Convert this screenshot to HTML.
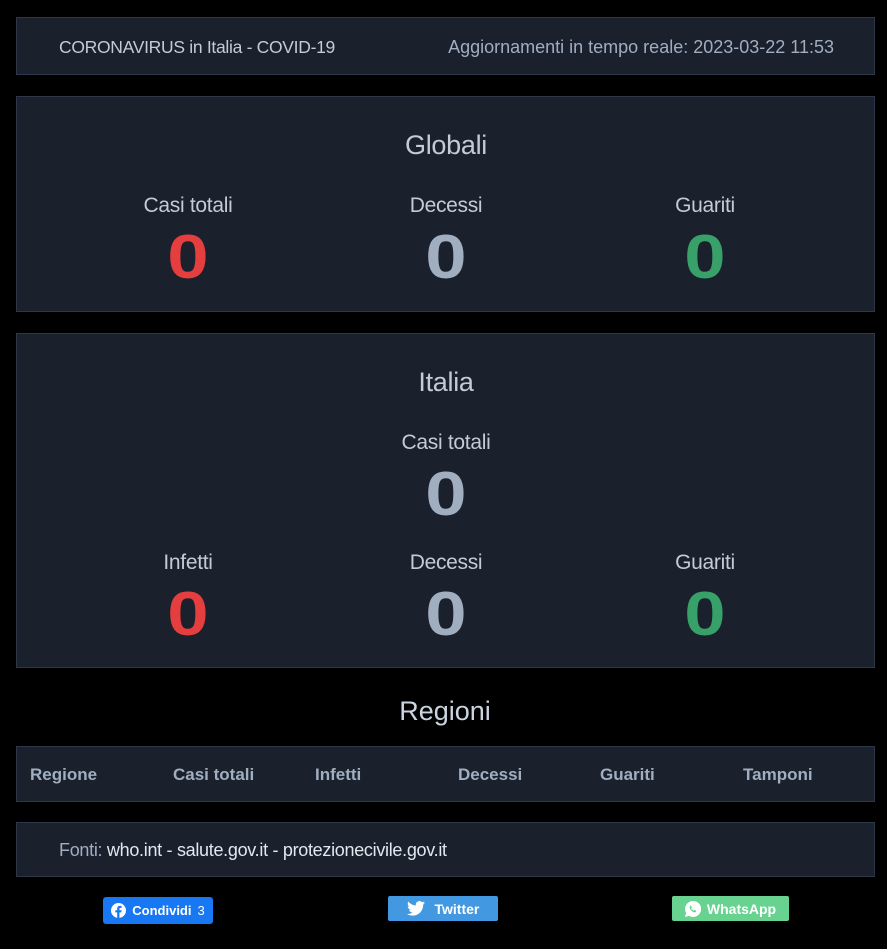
<!DOCTYPE html><html><head><style>
body{margin:0;background:#000;width:887px;height:949px;font-family:"Liberation Sans",sans-serif;color:#cbd5e0;position:relative;overflow:hidden}
.box{position:absolute;left:16px;width:857px;background:#1a202c;border:1px solid #2d3748}
.t{position:absolute;white-space:nowrap;transform:translateX(-50%);text-align:center}
.lbl{font-size:21px;color:#c3cbd6;letter-spacing:-0.3px}
.num{font-size:62px;font-weight:bold;line-height:1;transform:translateX(-50%) scaleX(1.2)}
.r{color:#e53e3e}.g{color:#a0aec0}.gr{color:#38a169}
.th{position:absolute;top:18px;font-size:17px;font-weight:bold;color:#a0aec0}
.btn{position:absolute;height:25px;border-radius:2px;color:#fff;font-size:14px;font-weight:bold;display:flex;align-items:center;justify-content:center;gap:6px}
</style></head><body>
<div class="box" style="top:17px;height:56px">
<div style="position:absolute;left:42px;top:19px;font-size:17.5px;color:#c3cbd6;letter-spacing:-0.3px">CORONAVIRUS in Italia - COVID-19</div>
<div style="position:absolute;right:40px;top:19px;font-size:18px;color:#a0aec0">Aggiornamenti in tempo reale: 2023-03-22 11:53</div>
</div>
<div class="box" style="top:96px;height:214px">
<div class="t lbl" style="left:429px;top:33px;font-size:27px">Globali</div>
<div class="t lbl" style="left:171px;top:97px">Casi totali</div>
<div class="t lbl" style="left:429px;top:97px">Decessi</div>
<div class="t lbl" style="left:688px;top:97px">Guariti</div>
<div class="t num r" style="left:171px;top:130px">0</div>
<div class="t num g" style="left:429px;top:130px">0</div>
<div class="t num gr" style="left:688px;top:130px">0</div>
</div>
<div class="box" style="top:333px;height:333px">
<div class="t lbl" style="left:429px;top:33px;font-size:27px">Italia</div>
<div class="t lbl" style="left:429px;top:97px">Casi totali</div>
<div class="t num g" style="left:429px;top:130px">0</div>
<div class="t lbl" style="left:171px;top:217px">Infetti</div>
<div class="t lbl" style="left:429px;top:217px">Decessi</div>
<div class="t lbl" style="left:688px;top:217px">Guariti</div>
<div class="t num r" style="left:171px;top:250px">0</div>
<div class="t num g" style="left:429px;top:250px">0</div>
<div class="t num gr" style="left:688px;top:250px">0</div>
</div>
<div class="t" style="left:445px;top:696px;font-size:27px;color:#cbd5e0">Regioni</div>
<div class="box" style="top:746px;height:54px">
<div class="th" style="left:13px">Regione</div>
<div class="th" style="left:156px">Casi totali</div>
<div class="th" style="left:298px">Infetti</div>
<div class="th" style="left:441px">Decessi</div>
<div class="th" style="left:583px">Guariti</div>
<div class="th" style="left:726px">Tamponi</div>
</div>
<div class="box" style="top:822px;height:53px">
<div style="position:absolute;left:42px;top:17px;font-size:18px;color:#a0aec0;letter-spacing:-0.3px">Fonti: <span style="color:#e2e8f0">who.int - salute.gov.it - protezionecivile.gov.it</span></div>
</div>
<div class="btn" style="left:103px;top:897px;width:110px;height:27px;background:#1877f2;border-radius:3px;font-size:13px"><svg width="15" height="15" viewBox="0 0 16 16"><circle cx="8" cy="8" r="8" fill="#fff"/><path d="M9 16V10h2l.3-2.3H9V6.3c0-.7.2-1.1 1.1-1.1h1.2V3.1c-.2 0-1-.1-1.8-.1-1.8 0-2.9 1-2.9 3V7.7H4.6V10h2v6z" fill="#1877f2"/></svg>Condividi <span style="font-weight:normal">3</span></div>
<div class="btn" style="left:388px;top:896px;width:110px;background:#4299e1"><svg width="18" height="15" viewBox="0 0 24 20"><path d="M24 2.4a10 10 0 0 1-2.8.8A5 5 0 0 0 23.3.5a10 10 0 0 1-3.1 1.2A4.9 4.9 0 0 0 11.8 6 14 14 0 0 1 1.7.9a4.9 4.9 0 0 0 1.5 6.6 4.9 4.9 0 0 1-2.2-.6 4.9 4.9 0 0 0 3.9 4.9 5 5 0 0 1-2.2.1 4.9 4.9 0 0 0 4.6 3.4A9.9 9.9 0 0 1 0 17.3 14 14 0 0 0 7.5 19.5c9.1 0 14-7.5 14-14v-.6A10 10 0 0 0 24 2.4z" fill="#fff"/></svg>&nbsp;Twitter</div>
<div class="btn" style="left:672px;top:896px;width:117px;background:#68d391"><svg width="16" height="16" viewBox="0 0 16 16"><path d="M8 0a8 8 0 0 0-6.9 12L0 16l4.1-1.1A8 8 0 1 0 8 0z" fill="#fff"/><path d="M5.5 4.5c.3 0 .5 0 .6.4l.6 1.4c0 .2 0 .4-.2.6l-.4.5c.5 1 1.4 1.8 2.4 2.3l.5-.6c.2-.2.4-.2.6-.1l1.4.7c.2.1.3.3.2.6-.2.7-.9 1.2-1.6 1.1C7.3 11 5 8.8 4.7 6.6c-.1-.8.3-1.8.8-2.1z" fill="#68d391"/></svg>WhatsApp</div>
</body></html>
